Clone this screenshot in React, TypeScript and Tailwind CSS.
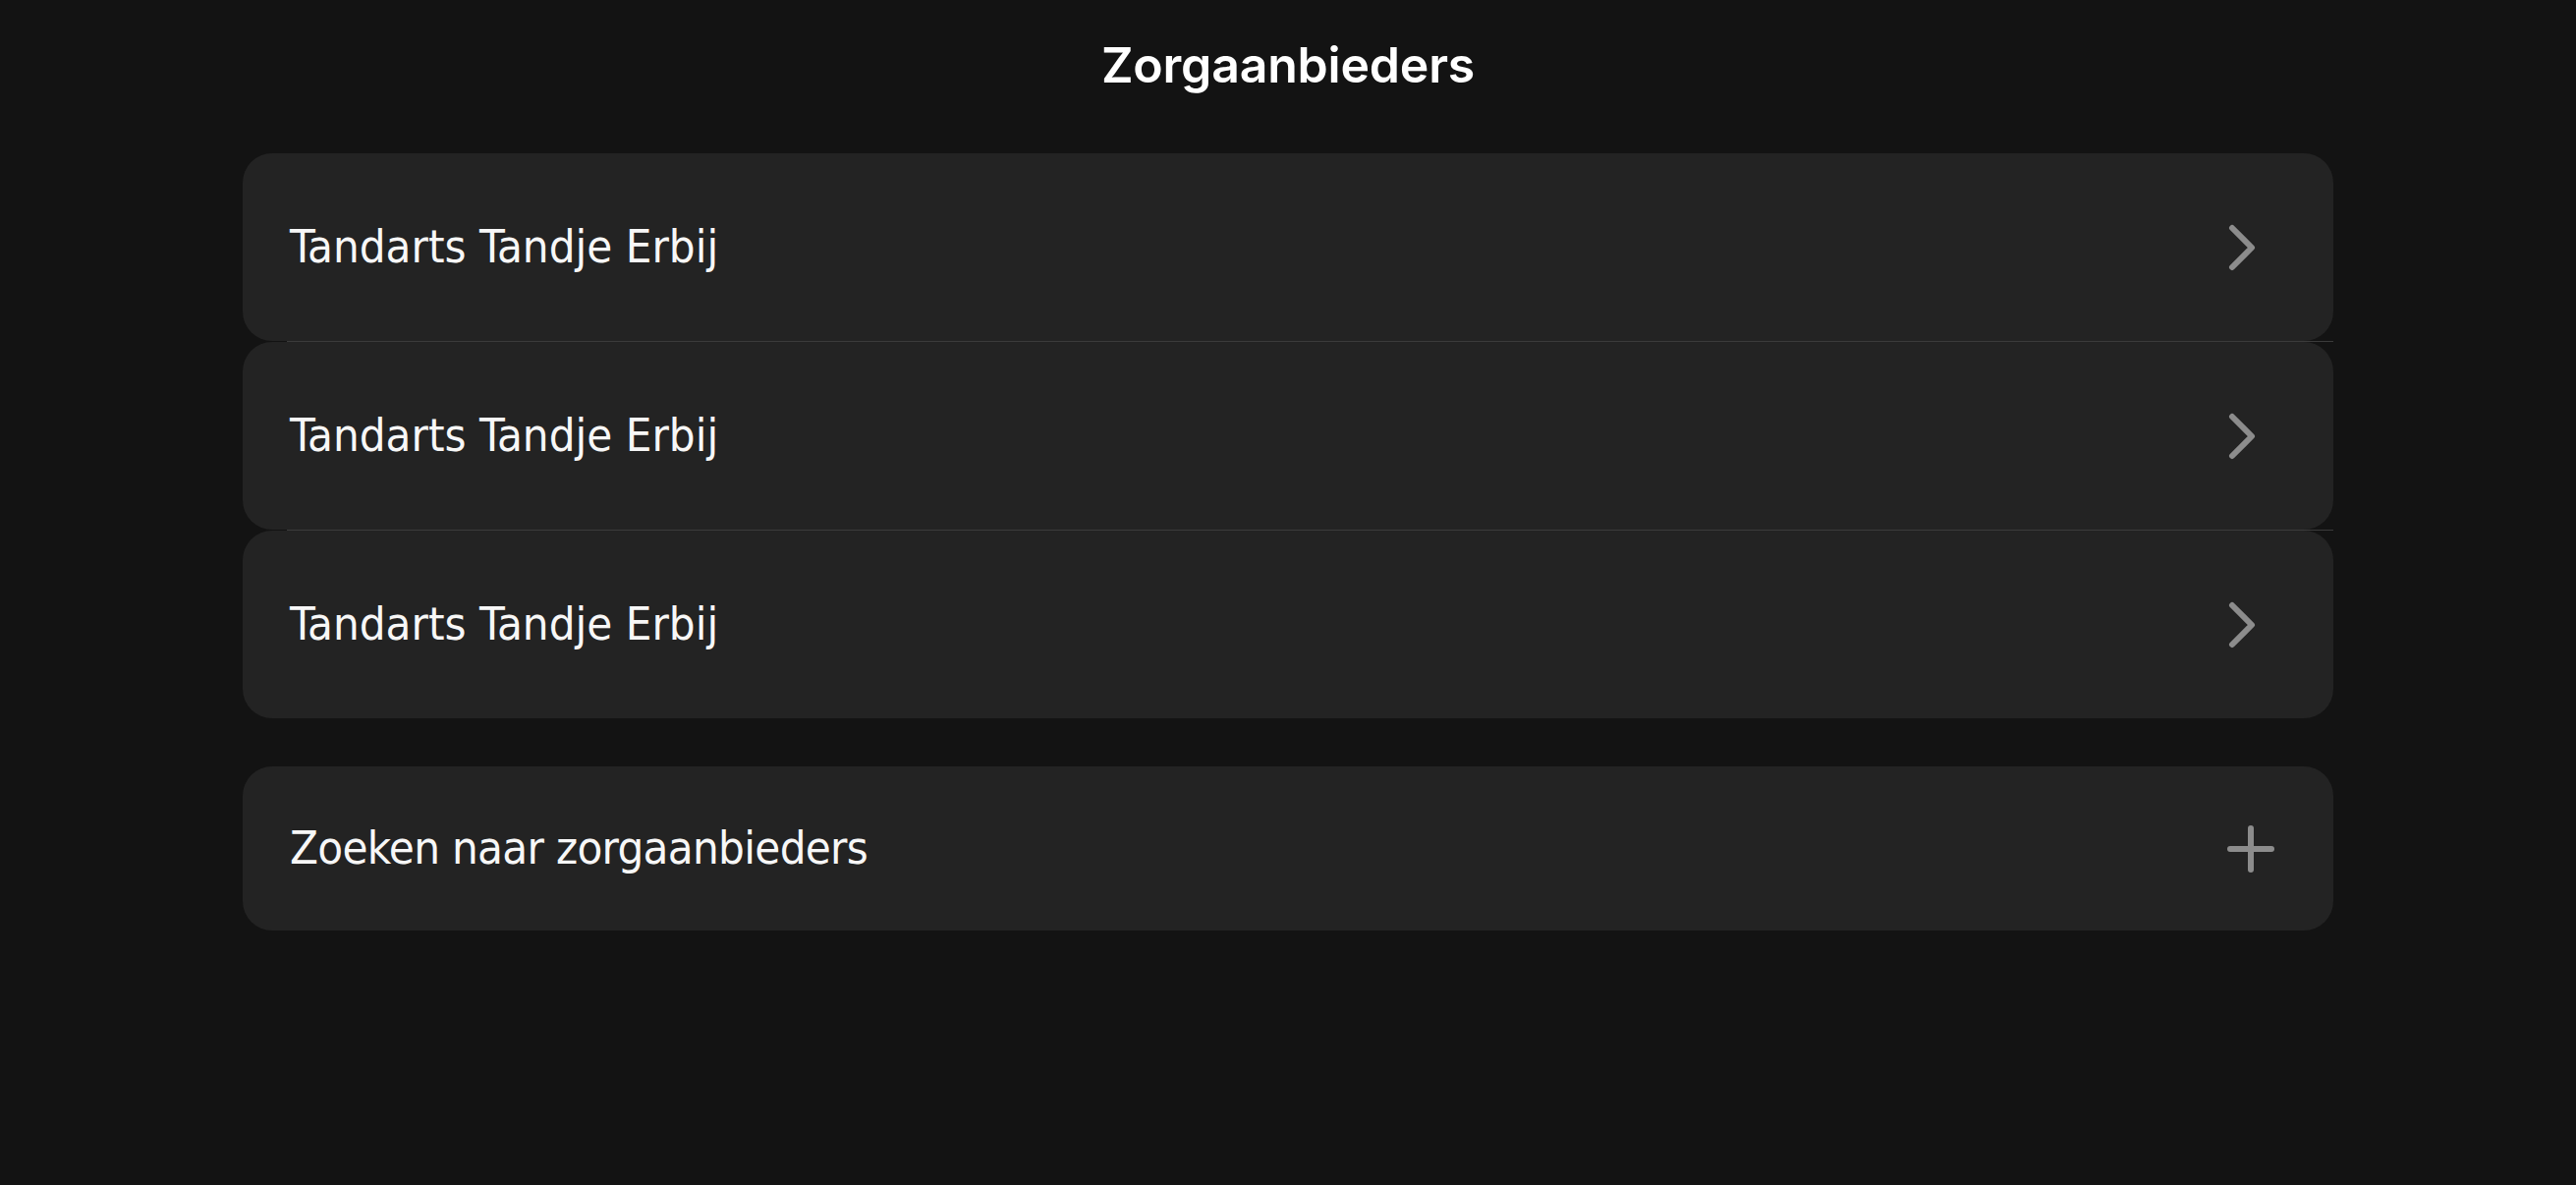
import { ChevronRight, Plus } from 'lucide-react';

const providers = ['Tandarts Tandje Erbij', 'Tandarts Tandje Erbij', 'Tandarts Tandje Erbij'];

export default function App() {
  return (
    <div className="min-h-[1206px] w-full bg-[#131313] px-[247px] pt-[36px]">
      <h1 className="text-center text-[50px] leading-[60px] font-semibold text-white font-['Inter',sans-serif] tracking-[-0.2px]">
        Zorgaanbieders
      </h1>

      <div className="mt-[60px] flex flex-col">
        {providers.map((name, index) => (
          <div key={index}>
            {index > 0 && <div className="ml-[45px] h-px bg-[#3b3b3b]" />}
            <div className="flex h-[191px] items-center justify-between rounded-[30px] bg-[#232323] pl-[48px] pr-[53px]">
              <span className="text-[47px] text-[#f7f7f7] font-['Liberation_Sans_Narrow','DejaVu_Sans_Condensed',sans-serif]">
                {name}
              </span>
              <ChevronRight className="h-[80px] w-[80px] text-[#8c8c8c]" strokeWidth={1.8} />
            </div>
          </div>
        ))}
      </div>

      <div className="mt-[49px] flex h-[167px] items-center justify-between rounded-[30px] bg-[#232323] pl-[48px] pr-[48px]">
        <span className="text-[47px] tracking-[-0.7px] text-[#f7f7f7] font-['Liberation_Sans_Narrow','DejaVu_Sans_Condensed',sans-serif]">
          Zoeken naar zorgaanbieders
        </span>
        <Plus className="h-[72px] w-[72px] text-[#8c8c8c]" strokeWidth={2} />
      </div>
    </div>
  );
}
